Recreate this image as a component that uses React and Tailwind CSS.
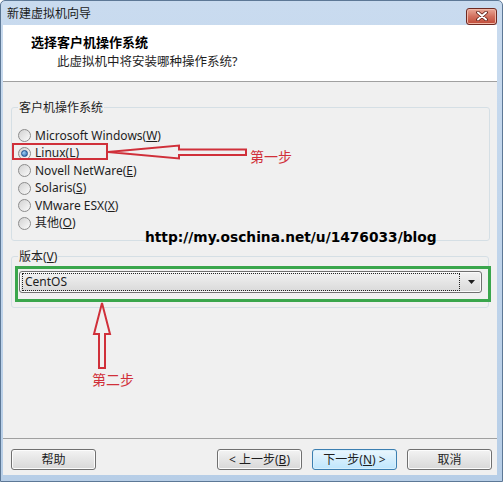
import React from "react";

const Radio = ({ checked, children }) => (
  <div className="flex items-center h-[17.5px]">
    <span className="ml-[6px] w-[13px] h-[13px] shrink-0 rounded-full border border-[#8c8c8c] bg-gradient-to-br from-[#d2d2d2] to-[#fbfbfb] flex items-center justify-center">
      {checked && (
        <span className="w-[7px] h-[7px] rounded-full border border-[#1d4f8f] bg-[radial-gradient(circle_at_35%_35%,#9fd0f5,#2160a8)]" />
      )}
    </span>
    <span className="ml-[4px] leading-none text-[#1e1e1e]">{children}</span>
  </div>
);

const Btn = ({ children, primary }) => (
  <button
    className={
      primary
        ? "w-[85px] h-[21px] rounded-[3px] border border-[#3c7fb1] bg-gradient-to-b from-[#eaf6fd] to-[#bee6fd] shadow-[inset_0_0_0_1px_#d9f0fc] text-[12px] leading-none text-[#1e1e1e]"
        : "w-[85px] h-[21px] rounded-[3px] border border-[#707070] bg-gradient-to-b from-[#f3f3f3] to-[#d8d8d8] shadow-[inset_0_0_0_1px_#fcfcfc] text-[12px] leading-none text-[#1e1e1e]"
    }
  >
    {children}
  </button>
);

export default function App() {
  return (
    <div className="relative w-[503px] h-[482px] overflow-hidden font-['Noto_Sans','Noto_Sans_CJK_SC',sans-serif] text-[12px] text-[#1e1e1e] bg-gradient-to-b from-[#c9dbef] to-[#b7cee7] border border-[#5d7896] rounded-t-[5px] flex flex-col">
      {/* title bar */}
      <div className="h-[24px] shrink-0 flex items-center justify-between pl-[6px] pr-[5px]">
        <span className="text-[12px] leading-none text-[#1a1a1a] mt-[2px]">新建虚拟机向导</span>
        <div className="w-[31px] h-[17px] mt-[6px] rounded-[3px] border border-[#6e2a22] bg-gradient-to-b from-[#e9a898] via-[#d2705e] to-[#c04a38] flex items-center justify-center shadow-[inset_0_0_0_1px_#f0b8a8]">
          <svg width="12" height="10" viewBox="0 0 12 10">
            <path d="M2 1.5 L10 8.5 M10 1.5 L2 8.5" stroke="#5a1d16" strokeWidth="3.6" strokeLinecap="round" />
            <path d="M2 1.5 L10 8.5 M10 1.5 L2 8.5" stroke="#ffffff" strokeWidth="2" strokeLinecap="round" />
          </svg>
        </div>
      </div>

      {/* client */}
      <div className="flex-1 ml-[2px] mr-[5px] mb-[6px] bg-[#f0f0f0] flex flex-col">
        {/* header */}
        <div className="h-[57px] shrink-0 bg-white border-b border-[#a0a0a0] pl-[28px] pt-[8px]">
          <div className="text-[13px] font-bold leading-[18px] text-black">选择客户机操作系统</div>
          <div className="text-[12.5px] leading-[18px] ml-[26px] mt-[2px] text-[#1e1e1e]">此虚拟机中将安装哪种操作系统?</div>
        </div>

        {/* body */}
        <div className="flex-1 flex flex-col px-[8px] pt-[17px]">
          <fieldset className="border border-[#d5dfe5] rounded-[3px] pb-[8px] mr-[-1px]">
            <legend className="ml-[6px] px-[1px] leading-[17px]">客户机操作系统</legend>
            <div className="pt-[11px] flex flex-col">
              <Radio>Microsoft Windows(<u>W</u>)</Radio>
              <Radio checked>Linux(<u>L</u>)</Radio>
              <Radio>Novell NetWare(<u>E</u>)</Radio>
              <Radio>Solaris(<u>S</u>)</Radio>
              <Radio>VMware ESX(<u>X</u>)</Radio>
              <Radio>其他(<u>O</u>)</Radio>
            </div>
          </fieldset>

          <fieldset className="mt-[7px] border border-[#d5dfe5] rounded-[3px] pb-[14px] pl-[7px] pr-[6px]">
            <legend className="ml-[-1px] px-[1px] leading-[17px]">版本(<u>V</u>)</legend>
            <div className="relative mt-[6px]">
              <div className="h-[22px] rounded-[3px] border border-[#707070] bg-gradient-to-b from-[#f2f2f2] to-[#d9d9d9] shadow-[inset_0_0_0_1px_#fafafa] flex items-center pl-[2px] pr-[5px]">
                <div className="flex-1 h-[18px] border border-dotted border-[#222] flex items-center pl-[2px] leading-none">CentOS</div>
                <svg width="7" height="4" viewBox="0 0 7 4" className="ml-[8px] mr-[1px]">
                  <path d="M0 0 H7 L3.5 4 Z" fill="#1e1e1e" />
                </svg>
              </div>
              <div className="absolute left-[-4px] right-[-9px] top-[-5px] bottom-[-9px] border-[3px] border-[#3aa64c]" />
            </div>
          </fieldset>
        </div>

        {/* footer */}
        <div className="shrink-0 border-t border-[#a0a0a0] h-[37px] flex items-start pt-[10px] pl-[8px] pr-[5px]">
          <Btn>帮助</Btn>
          <div className="flex-1" />
          <div className="flex gap-[10px]">
            <Btn>&lt; 上一步(<u>B</u>)</Btn>
            <Btn primary>下一步(<u>N</u>) &gt;</Btn>
            <Btn>取消</Btn>
          </div>
        </div>
      </div>

      {/* annotations */}
      <div className="absolute left-[11px] top-[142px] w-[96px] h-[17px] border-2 border-[#d0303a]" />
      <svg className="absolute left-0 top-0" width="503" height="482" viewBox="0 0 503 482">
        <polygon points="107,151 178,144.5 178,148.5 245,148.5 245,154 178,154 178,157.5" fill="none" stroke="#d0303a" strokeWidth="2" />
        <polygon points="101,302 109,333 104,333 104,367 98,367 98,333 93,333" fill="none" stroke="#d0303a" strokeWidth="2" />
      </svg>
      <div className="absolute left-[249px] top-[145px] text-[14px] leading-[20px] text-[#d0303a] font-['Noto_Sans_CJK_SC',sans-serif]">第一步</div>
      <div className="absolute left-[91px] top-[368px] text-[14px] leading-[20px] text-[#d0303a] font-['Noto_Sans_CJK_SC',sans-serif]">第二步</div>
      <div className="absolute left-[144px] top-[227px] text-[13.75px] leading-[18px] font-bold text-black font-['DejaVu_Sans',sans-serif]">http://my.oschina.net/u/1476033/blog</div>
    </div>
  );
}
